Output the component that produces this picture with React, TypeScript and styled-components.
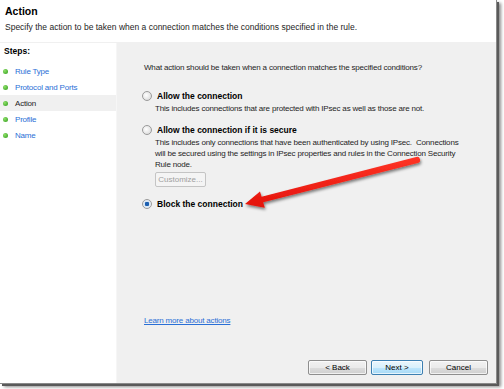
import React from 'react';
import styled, { createGlobalStyle } from 'styled-components';

const GlobalStyle = createGlobalStyle`
  html, body {
    margin: 0;
    padding: 0;
    background: #ffffff;
  }
  body {
    font-family: 'Liberation Sans', Arial, sans-serif;
    font-size: 8px;
    color: #1e1e1e;
  }
`;

const steps = [
  { label: 'Rule Type', current: false },
  { label: 'Protocol and Ports', current: false },
  { label: 'Action', current: true },
  { label: 'Profile', current: false },
  { label: 'Name', current: false },
];

const App = () => {
  return (
    <>
      <GlobalStyle />
      <Frame>
        <Wizard>
          <Header>
            <Title>Action</Title>
            <Subtitle>
              Specify the action to be taken when a connection matches the conditions specified in the rule.
            </Subtitle>
          </Header>
          <Body>
            <StepsPanel>
              <StepsTitle>Steps:</StepsTitle>
              {steps.map((s) => (
                <StepRow key={s.label} $current={s.current}>
                  <Bullet />
                  <StepLabel $current={s.current}>{s.label}</StepLabel>
                </StepRow>
              ))}
            </StepsPanel>
            <Content>
              <Question>What action should be taken when a connection matches the specified conditions?</Question>
              <Options>
                <Option>
                  <RadioLine>
                    <Radio />
                    <OptionLabel>Allow the connection</OptionLabel>
                  </RadioLine>
                  <Description>This includes connections that are protected with IPsec as well as those are not.</Description>
                </Option>
                <Option>
                  <RadioLine>
                    <Radio />
                    <OptionLabel>Allow the connection if it is secure</OptionLabel>
                  </RadioLine>
                  <Description>
                    This includes only connections that have been authenticated by using IPsec.&nbsp; Connections
                    will be secured using the settings in IPsec properties and rules in the Connection Security
                    Rule node.
                  </Description>
                  <CustomizeButton disabled>Customize...</CustomizeButton>
                </Option>
                <Option>
                  <RadioLine>
                    <Radio $checked />
                    <OptionLabel>Block the connection</OptionLabel>
                  </RadioLine>
                </Option>
              </Options>
              <Spacer />
              <LearnLink href="#">Learn more about actions</LearnLink>
              <ButtonBar>
                <WizButton>&lt; Back</WizButton>
                <NextButton $primary>Next &gt;</NextButton>
                <CancelButton>Cancel</CancelButton>
              </ButtonBar>
            </Content>
          </Body>
        </Wizard>
        <Arrow viewBox="0 0 504 389">
          <defs>
            <filter id="shadow" x="-10%" y="-40%" width="130%" height="200%">
              <feGaussianBlur in="SourceAlpha" stdDeviation="1.5" />
              <feOffset dx="1" dy="2" result="b" />
              <feComponentTransfer>
                <feFuncA type="linear" slope="0.5" />
              </feComponentTransfer>
              <feMerge>
                <feMergeNode />
                <feMergeNode in="SourceGraphic" />
              </feMerge>
            </filter>
            <linearGradient id="red" x1="0" y1="0" x2="0" y2="1">
              <stop offset="0" stopColor="#ff3526" />
              <stop offset="1" stopColor="#e3120b" />
            </linearGradient>
          </defs>
          <g filter="url(#shadow)">
            <path
              d="M245 204 L260 191.5 L261.6 196.8 L416.2 157 A3 3 0 0 1 417.8 163 L263.2 202.2 L264.8 207.8 Z"
              fill="url(#red)"
            />
          </g>
        </Arrow>
      </Frame>
    </>
  );
};

export default App;

const Frame = styled.div`
  position: relative;
  width: 504px;
  height: 389px;
  overflow: hidden;
`;

const Wizard = styled.div`
  width: 497px;
  height: 384px;
  background: #ffffff;
  display: flex;
  flex-direction: column;
  box-shadow: 2px 2px 0 #5a5a5a, 4px 3px 3px rgba(0, 0, 0, 0.45);
  border-right: 1px solid #8a8a8a;
  border-bottom: 1px solid #8a8a8a;
  box-sizing: border-box;
`;

const Header = styled.div`
  height: 43px;
  padding: 4px 0 0 5px;
  box-sizing: border-box;
  border-bottom: 1px solid #f0f0f0;
`;

const Title = styled.div`
  font-size: 10.5px;
  font-weight: bold;
  color: #000;
  line-height: 14px;
`;

const Subtitle = styled.div`
  margin-top: 4px;
  font-size: 8.5px;
  line-height: 11px;
  color: #1e1e1e;
`;

const Body = styled.div`
  flex: 1;
  display: flex;
  min-height: 0;
`;

const StepsPanel = styled.div`
  width: 116px;
  background: #ffffff;
  border-right: 1px solid #f6f6f6;
  display: flex;
  flex-direction: column;
`;

const StepsTitle = styled.div`
  font-weight: bold;
  font-size: 8.5px;
  color: #000;
  padding-left: 4px;
  line-height: 16px;
  margin-bottom: 4px;
`;

const StepRow = styled.div<{ $current?: boolean }>`
  display: flex;
  align-items: center;
  height: 16px;
  padding-left: 3px;
  background: ${(p) => (p.$current ? '#f0f0f0' : 'transparent')};
`;

const Bullet = styled.span`
  width: 5px;
  height: 5px;
  border-radius: 50%;
  background: radial-gradient(circle at 35% 35%, #8ee06a, #2e9a18);
  margin-right: 7px;
  flex: none;
`;

const StepLabel = styled.span<{ $current?: boolean }>`
  color: ${(p) => (p.$current ? '#1e1e1e' : '#2a6fd6')};
  font-size: 8px;
  letter-spacing: -0.2px;
`;

const Content = styled.div`
  flex: 1;
  background: #f0f0f0;
  display: flex;
  flex-direction: column;
  padding: 19px 8px 8px 27px;
  min-width: 0;
  letter-spacing: -0.18px;
`;

const Question = styled.div`
  font-size: 8px;
  line-height: 11px;
`;

const Options = styled.div`
  margin: 17px 0 0 -2px;
  display: flex;
  flex-direction: column;
  gap: 10px;
`;

const Option = styled.div`
  display: flex;
  flex-direction: column;
`;

const RadioLine = styled.div`
  display: flex;
  align-items: center;
  height: 12px;
`;

const Radio = styled.span<{ $checked?: boolean }>`
  width: 8px;
  height: 8px;
  border-radius: 50%;
  border: 1px solid #9a9a9a;
  background: ${(p) =>
    p.$checked
      ? 'radial-gradient(circle, #1c5fb0 0 2px, #d8e6f4 2.5px, #f4f4f4 100%)'
      : 'radial-gradient(circle at 40% 40%, #ffffff, #d4d4d4)'};
  margin-right: 5px;
  flex: none;
`;

const OptionLabel = styled.span`
  font-weight: bold;
  font-size: 8.5px;
  letter-spacing: 0;
  color: #000;
`;

const Description = styled.div`
  padding-left: 13px;
  max-width: 305px;
  margin-top: 1px;
  font-size: 8px;
  line-height: 11px;
  color: #1e1e1e;
`;

const CustomizeButton = styled.button`
  align-self: flex-start;
  margin: 2px 0 1px 13px;
  width: 51px;
  height: 15px;
  padding: 0;
  font-family: 'Liberation Sans', Arial, sans-serif;
  font-size: 8px;
  color: #a0a0a0;
  background: #f4f4f4;
  border: 1px solid #c4c4c4;
  border-radius: 2px;
`;

const Spacer = styled.div`
  flex: 1;
`;

const LearnLink = styled.a`
  font-size: 8px;
  color: #2a6fd6;
  text-decoration: underline;
  align-self: flex-start;
`;

const ButtonBar = styled.div`
  margin-top: 35px;
  display: flex;
  justify-content: flex-end;
  gap: 4px;
`;

const WizButton = styled.button<{ $primary?: boolean }>`
  width: 59px;
  height: 15px;
  padding: 0;
  font-family: 'Liberation Sans', Arial, sans-serif;
  font-size: 8px;
  color: #000;
  border-radius: 2px;
  border: 1px solid ${(p) => (p.$primary ? '#3c7fb1' : '#8e8e8e')};
  background: ${(p) =>
    p.$primary
      ? 'linear-gradient(#eaf6fd 0%, #d9f0fc 50%, #bee6fd 51%, #a7d9f5 100%)'
      : 'linear-gradient(#f2f2f2 0%, #ebebeb 50%, #dddddd 51%, #cfcfcf 100%)'};
  box-shadow: inset 0 0 0 1px rgba(255, 255, 255, 0.7);
`;

const NextButton = styled(WizButton)`
  width: 52px;
`;

const CancelButton = styled(WizButton)`
  margin-left: 2px;
`;

const Arrow = styled.svg`
  position: absolute;
  left: 0;
  top: 0;
  width: 504px;
  height: 389px;
  pointer-events: none;
`;
